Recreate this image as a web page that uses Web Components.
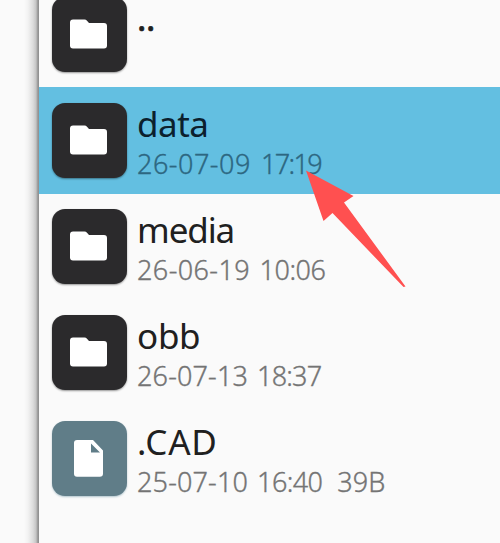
<!DOCTYPE html>
<html lang="en"><head><meta charset="utf-8"><title>Files</title>
<style>html,body{margin:0;height:100%;overflow:hidden;background:#fafafa}</style></head>
<body>
<file-panel>
<file-row kind="folder" name=".." style="--ns:-.4px;--stroke:.7px"></file-row>
<file-row kind="folder" name="data" date="26-07-09" time="17:19" style="--ns:-.5px;--ds:.5px;--ts:-1.6px;--gap:10px" selected></file-row>
<file-row kind="folder" name="media" date="26-06-19" time="10:06" style="--ns:-1.1px;--ds:.4px;--ts:-.5px;--gap:9.500px"></file-row>
<file-row kind="folder" name="obb" date="26-07-13" time="18:37" style="--ds:.15px;--ts:-.8px;--gap:9px"></file-row>
<file-row kind="file" name=".CAD" date="25-07-10" time="16:40" size="39B" style="--ns:.7px;--ds:.15px;--ts:-.6px;--gap:9px"></file-row>
<pointer-arrow slot="overlay"></pointer-arrow>
</file-panel>
<script>
customElements.define('file-icon', class extends HTMLElement {
  connectedCallback() {
    const folder = this.getAttribute('kind') === 'folder';
    this.attachShadow({mode:'open'}).innerHTML = `<style>
:host{display:block;flex:none;width:75px;height:75px;border-radius:13px;background:${folder ? '#2b2a2c' : '#607d88'};box-shadow:0 1px 2px ${folder ? 'rgba(0,0,0,.4)' : 'rgba(70,120,140,.4)'}}
svg{display:block}</style>
<svg width="75" height="75" viewBox="0 0 75 75">${folder
  ? '<path fill="#fff" d="M21 22.500H32.500Q34 22.500 35 23.700L37 26H52Q55 26 55 29V48.500Q55 51.500 52 51.500H21Q18 51.500 18 48.500V25.500Q18 22.500 21 22.500Z"/>'
  : '<path fill="#fff" fill-rule="evenodd" d="M25 19H41L51 29.500V52.500Q51 55.700 47.800 55.700H25Q22 55.700 22 52.700V22Q22 19 25 19ZM39 22.500V31.500H48Z"/>'}</svg>`;
  }
});
customElements.define('file-row', class extends HTMLElement {
  connectedCallback() {
    const a = n => this.getAttribute(n) || '';
    const meta = a('date') ? `<div class="meta"><span class="date">${a('date')}</span><span class="time">${a('time')}</span>${a('size') ? `<span class="size">${a('size')}</span>` : ''}</div>` : '';
    this.attachShadow({mode:'open'}).innerHTML = `<style>
:host{display:flex;box-sizing:border-box;height:106px;padding:16px 0 0 13px;gap:10px;font-family:"Noto Sans",sans-serif;white-space:nowrap;color:#202020}
:host([selected]){background:#63bfe1;height:107px;margin-bottom:-1px;color:#0b202d}
.text{display:flex;flex-direction:column}
.name{font-size:35px;line-height:42px;letter-spacing:var(--ns,-.3px);-webkit-text-stroke:var(--stroke,0)}
.meta{display:flex;font-size:27px;font-weight:300;line-height:38px;color:#747474;-webkit-text-stroke:.35px}
.date{letter-spacing:var(--ds)}
.time{letter-spacing:var(--ts);margin-left:var(--gap)}
.size{margin-left:15px}
:host([selected]) .meta{color:#2d6781}
</style><file-icon kind="${a('kind')}"></file-icon>
<div class="text"><span class="name">${a('name')}</span>${meta}</div>`;
  }
});
customElements.define('pointer-arrow', class extends HTMLElement {
  connectedCallback() {
    this.attachShadow({mode:'open'}).innerHTML = `<style>:host{position:absolute;left:300px;top:165px}svg{display:block}</style>
<svg width="110" height="125" viewBox="300 165 110 125"><path fill="#ff5050" d="M306 170.500L353.500 196L344 202.500L405.500 286.500L403.500 287L332.500 213L323.500 221Z"/></svg>`;
  }
});
customElements.define('file-panel', class extends HTMLElement {
  connectedCallback() {
    this.attachShadow({mode:'open'}).innerHTML = `<style>
:host{display:flex;position:relative;height:543px;overflow:hidden;background:#fafafa}
.edge{flex:none;width:39px;background:linear-gradient(to right,#fafafa 24px,#f2f2f2 28px,#dcdcdc 33px,#c5c5c5 36px,#929292 38px,#929292)}
.list{flex:1;margin-top:-19px;display:flex;flex-direction:column}
</style><div class="edge"></div><div class="list"><slot></slot></div><slot name="overlay"></slot>`;
  }
});
</script>
</body></html></script>
